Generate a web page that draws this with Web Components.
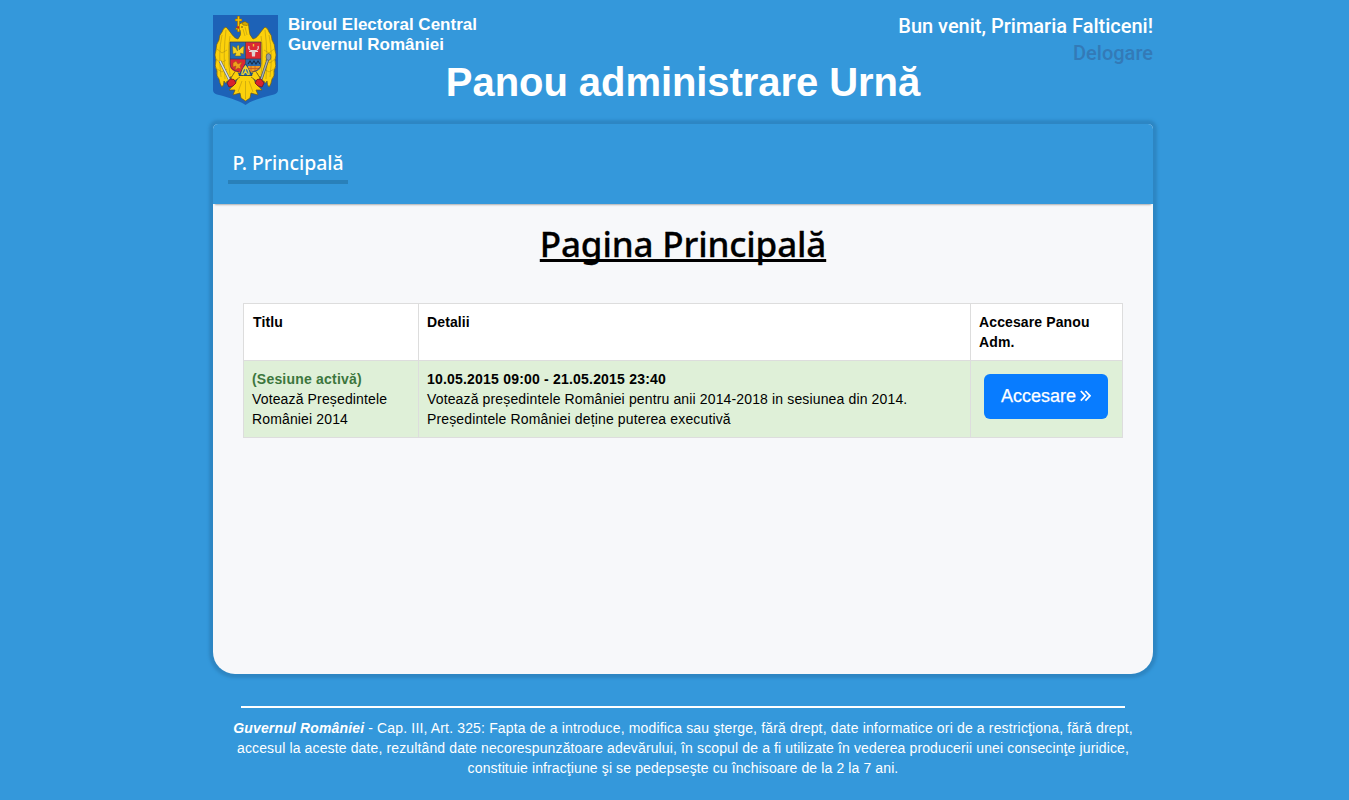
<!DOCTYPE html>
<html lang="ro">
<head>
<meta charset="utf-8">
<title>Panou administrare Urnă</title>
<style>
html,body{margin:0;height:100%;background:#3498db;overflow:hidden}
body{font:14px/20px "Liberation Sans",Arial,sans-serif;color:#000}
</style>
</head>
<body>
<admin-page></admin-page>
<script>
const define=(name,html)=>customElements.define(name,class extends HTMLElement{
  constructor(){super();this.attachShadow({mode:'open'}).innerHTML=html;}
});

define('state-crest',`<style>:host{display:block;width:65px;height:90px}svg{display:block}</style>
<svg width="65" height="90" viewBox="0 0 65 90">
<path d="M0 0H65V75Q65 78 61 79.500Q39 85 32.500 90Q26 85 4 79.500Q0 78 0 75Z" fill="#1d62b7"/>
<g fill="#fcd10b" stroke="#6d5a18" stroke-width=".7" stroke-linejoin="round">
<path d="M25 24C20 23 18 17 13 12Q10 13 9 17Q6 20 6 25Q3 29 3 35Q1 40 3 45Q1 51 4 56Q3 61 6 64Q7 70 9 72Q11 70 11 66Q13 70 14 66Q17 67 17 62Q20 63 21 58L44 58Q45 63 48 62Q48 67 51 66Q52 70 54 66Q54 70 56 72Q58 70 59 64Q62 61 61 56Q64 51 62 45Q64 40 62 35Q62 29 59 25Q59 20 56 17Q55 13 52 12C47 17 45 23 40 24Q36 20 36 14Q36 7 31 7Q26 8 25 12L22 14Q25 16 27 15Q29 20 25 24Z"/>
<path d="M26 60Q24 68 16 75L22 75L20 80L27 78L28 83L32.5 86L37 83L38 78L45 80L43 75L49 75Q41 68 39 60Z"/>
<path d="M23 55L18 63L20 67L27 62M42 55L47 63L45 67L38 62"/>
</g>
<g fill="none" stroke="#a98b12" stroke-width=".5">
<path d="M13 15Q10 38 12 64M17 21Q14 38 17 60M9 20Q5 38 8 62M52 15Q55 38 53 64M48 21Q51 38 48 60M56 20Q60 38 57 62M32.5 66V84M29 66L25 77M36 66L40 77M30 14L32 21M32 12L34 20"/>
<path d="M4 34L9 38L14 35M3 44L8 48L13 45M4 54L9 57L14 54M61 34L56 38L51 35M62 44L57 48L52 45M61 54L56 57L51 54"/>
</g>
<path d="M25.5 1V17M22 5H29" stroke="#9b6a00" stroke-width="2.6"/><path d="M25.5 1.500V16.500M22.500 5H28.500" stroke="#f8c300" stroke-width="1.5"/>
<path d="M29 8L32 6.5L36 9L34 10.5L30 10Z" fill="#d3a900" stroke="#72570a" stroke-width=".5"/><path d="M23 12L26 11V14Z" fill="#c92220"/><circle cx="29" cy="12" r=".7" fill="#222"/>
<path d="M7 46L18 68" stroke="#54606c" stroke-width="2.6"/><path d="M7 46L18 68" stroke="#dce3e7" stroke-width="1.5"/>
<path d="M55 44L47 68" stroke="#4b5358" stroke-width="2.6"/><path d="M55 44L47 68" stroke="#aab2b5" stroke-width="1.3"/>
<ellipse cx="55.5" cy="42" rx="2.4" ry="3.4" fill="#929b9e" stroke="#454d51" stroke-width=".6"/>
<g fill="#d9232d" stroke="#74141a" stroke-width=".8"><path d="M14 68L17 64L21 64.500L23 68L20 71L16 72L15 70Z"/><path d="M51 68L48 64L44 64.500L42 68L45 71L49 72L50 70Z"/></g>
<path d="M17 27H32.5V44H17Z" fill="#2267b5"/><path d="M32.5 27H48V44H32.5Z" fill="#dc2834"/>
<path d="M17 44H32.5V59L25 57Q17 56 17 50Z" fill="#dc2834"/><path d="M32.5 44H48V50Q48 56 40 57L32.5 59Z" fill="#2c68aa"/>
<path d="M35 51H47.500V53Q44 57 38 57L35 56Z" fill="#f09a24"/><path d="M36 53.500H46M38 51V57M42 51V57" stroke="#c45a20" stroke-width=".8"/>
<path d="M19.500 31L23 33L24.500 36L24 31L26 30L26 35L29 32L31 31L30.500 39L27.500 38L28 41H22L23 38L20 39Z" fill="#f6d323" stroke="#6d671d" stroke-width=".5"/>
<path d="M36 31Q35 35 38 35.500H43Q46 35 45 31M36 36.500H45" fill="none" stroke="#e6dddd" stroke-width="1.1"/><path d="M38.500 35H42.500L42 41.500H39Z" fill="#ded2d1"/><path d="M40.5 29V31.500" stroke="#f0c834" stroke-width="1.4"/>
<path d="M20 48L23 46L25 49L29 47L27 51L28 54L25 53L22 55L23 51L20 52Z" fill="#f0a01d" stroke="#9c5512" stroke-width=".5"/>
<path d="M35 49L37 46L39 49L41 46L43 49L45 46L47 49" stroke="#182e4b" fill="none" stroke-width="1.1"/>
<path d="M32.5 48.500L26 60.500H39Z" fill="#246bb4" stroke="#17385f" stroke-width=".7"/>
<path d="M29 60Q28.500 56 32.5 51Q36.500 56 36 60M32.5 51V57M30 60L32.500 56L35 60" fill="none" stroke="#f1d32b" stroke-width="1.3"/>
<path d="M17 27H48V49Q48 55 39 57M26 57Q17 55 17 49V27M32.5 27V48M17 44H48" fill="none" stroke="#343b52" stroke-width=".7"/>
</svg>`);

define('site-header',`<style>
:host{display:grid;grid-template-columns:65px 1fr 300px;height:109px;color:#fff;position:relative}
.org{font-weight:bold;font-size:17px;line-height:20px;padding-left:10px}
.user{font:500 20px/27px Roboto,sans-serif;text-align:right;margin-top:-2px;white-space:nowrap}
a{color:#337ab7}
h1{position:absolute;left:0;right:0;top:44px;margin:0;text-align:center;font-size:40px;line-height:46px;letter-spacing:-.06px}
</style><state-crest></state-crest><div class="org">Biroul Electoral Central<br>Guvernul României</div>
<div class="user">Bun venit, Primaria Falticeni!<br><a>Delogare</a></div><h1>Panou administrare Urnă</h1>`);

define('nav-bar',`<style>
:host{display:flex;height:80px;padding:20px 15px 0;box-sizing:border-box;background:#3498db;border-radius:5px 5px 0 0;box-shadow:0 3px 2px -2px rgba(0,0,0,.3)}
a{box-sizing:border-box;width:120px;height:40px;border-bottom:4px solid #2980b9;color:#fff;font:500 19.4px/38px "Noto Sans",sans-serif;text-align:center;white-space:nowrap}
</style><a><slot></slot></a>`);

define('session-button',`<style>
:host{display:flex;width:124px;height:45px;margin:5px 0 0 5px;background:#087cff;color:#fff;border-radius:6px;font-size:18px;align-items:center;justify-content:center;gap:4px}
span{position:relative;top:-1px;-webkit-text-stroke:.25px #fff}
svg{position:relative;top:-.5px}
</style><span><slot></slot></span><svg width="11" height="12" viewBox="0 0 11 12" fill="none" stroke="#fff" stroke-width="1.8"><path d="M.8 1L5.4 5.8L.8 10.6M5.4 1L10 5.8L5.4 10.6"/></svg>`);

define('session-table',`<style>
:host{display:block}
table{width:880px;border-collapse:collapse;table-layout:fixed;background:#fff}
td,th{border:1px solid #ddd;padding:8px;vertical-align:top;text-align:left;line-height:20px;white-space:nowrap}
th{letter-spacing:.12px}
th:first-child{padding-left:9px}
td{letter-spacing:.14px}
tbody td{background:#dff0d8}
b.state{color:#3c763d;letter-spacing:.2px}
.date{letter-spacing:.2px}
.action{letter-spacing:0;padding-bottom:0;height:60px}
</style><table><colgroup><col style="width:175px"><col style="width:552px"><col style="width:152px"></colgroup>
<thead><tr><th>Titlu</th><th>Detalii</th><th>Accesare Panou<br>Adm.</th></tr></thead>
<tbody><tr><td><b class="state">(Sesiune activă)</b><br>Votează Președintele<br>României 2014</td>
<td><b class="date">10.05.2015 09:00 - 21.05.2015 23:40</b><br>Votează președintele României pentru anii 2014-2018 in sesiunea din 2014.<br>Președintele României deține puterea executivă</td>
<td class="action"><session-button>Accesare</session-button></td></tr></tbody></table>`);

define('content-panel',`<style>
:host{display:block;height:550px;background:#f7f8fa;border-radius:5px 5px 22px 22px;box-shadow:0 0 3px 3.5px #2d86c3}
h2{margin:20px 0 0;height:79px;text-align:center;font:500 35px/40px "Noto Sans",sans-serif;letter-spacing:-.15px;-webkit-text-stroke:.3px #000;text-decoration:underline;text-decoration-thickness:3px;text-underline-offset:2px;text-decoration-skip-ink:none}
session-table{padding:0 30px}
</style><nav-bar>P. Principală</nav-bar><h2>Pagina Principală</h2><session-table></session-table>`);

define('legal-footer',`<style>
:host{display:block;margin-top:32px;color:#fff;text-align:center;white-space:nowrap}
hr{width:884px;height:2px;border:0;margin:0 auto 10px;background:#fff}
div{letter-spacing:.155px}
div:nth-of-type(2){letter-spacing:.13px}
div:nth-of-type(3){letter-spacing:.115px}
</style><hr><div><b><i>Guvernul României</i></b> - Cap. III, Art. 325: Fapta de a introduce, modifica sau şterge, fără drept, date informatice ori de a restricţiona, fără drept,</div><div>accesul la aceste date, rezultând date necorespunzătoare adevărului, în scopul de a fi utilizate în vederea producerii unei consecinţe juridice,</div><div>constituie infracţiune şi se pedepseşte cu închisoare de la 2 la 7 ani.</div>`);

define('admin-page',`<style>:host{display:block;width:940px;padding:15px 0 0 213px}</style>
<site-header></site-header><content-panel></content-panel><legal-footer></legal-footer>`);
</script>
</body>
</html>
